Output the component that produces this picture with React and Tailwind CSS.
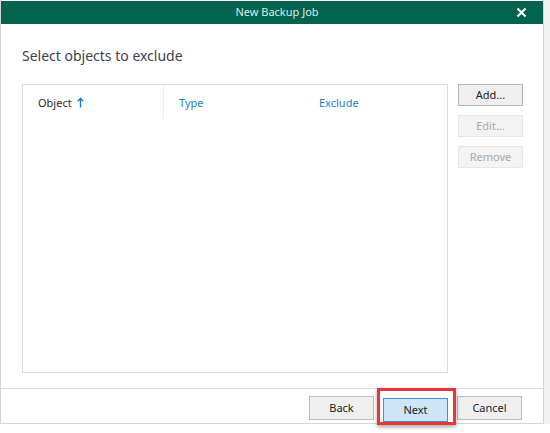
import React from 'react'

const font = { fontFamily: '"Noto Sans", "Open Sans", sans-serif' }

function SideButton({ children, disabled }) {
  return (
    <button
      className={
        'w-[65px] h-[22px] text-[11px] border ' +
        (disabled
          ? 'bg-[#f3f3f3] border-[#e6e6e6] text-[#a8a8a8]'
          : 'bg-[#efefef] border-[#b4b4b4] text-[#222]')
      }
    >
      {children}
    </button>
  )
}

function FooterButton({ children, primary }) {
  return (
    <button
      className={
        'w-[65px] h-[24px] text-[11px] text-[#222] border ' +
        (primary ? 'bg-[#cde5f7] border-[#3d8fd0]' : 'bg-[#efefef] border-[#bdbdbd]')
      }
    >
      {children}
    </button>
  )
}

export default function App() {
  return (
    <div className="w-[550px] h-[433px] bg-white overflow-hidden" style={font}>
      <div className="flex h-[424px]">
        {/* dialog */}
        <div className="w-[544px] h-full flex flex-col border-l border-r border-b border-[#d4d4d4] pt-[1px]">
          {/* title bar */}
          <div className="h-[23px] bg-[#04634f] flex items-center relative">
            <div className="flex-1 text-center text-[11px] text-[#d9eee7] pl-[10px]">New Backup Job</div>
            <svg className="absolute right-[16px] top-[6px]" width="11" height="11" viewBox="0 0 11 11">
              <path d="M1.5 1.5 L9.5 9.5 M9.5 1.5 L1.5 9.5" stroke="#ffffff" strokeWidth="2" />
            </svg>
          </div>

          {/* body */}
          <div className="flex-1 flex flex-col bg-white">
            <div className="pl-[21px] pt-[21px] h-[60px] text-[14px] text-[#3f3f4d]">Select objects to exclude</div>
            <div className="flex pl-[21px] gap-[10px]">
              <div className="w-[426px] h-[289px] border border-[#dcdcdc]">
                <div className="flex h-[34px] text-[11px]">
                  <div className="w-[141px] border-r border-[#eeeeee] pl-[15px] pt-[10px] text-[#2b2b2b] flex items-start gap-[5px]">
                    <span>Object</span>
                    <svg className="mt-[2px]" width="7" height="11" viewBox="0 0 7 11">
                      <path d="M3.5 10.5 V1.5 M0.8 4.2 L3.5 1.3 L6.2 4.2" stroke="#1b7fc4" strokeWidth="1.4" fill="none" />
                    </svg>
                  </div>
                  <div className="w-[140px] pl-[15px] pt-[10px] text-[#1b7fc4]">Type</div>
                  <div className="pl-[15px] pt-[10px] text-[#1b7fc4]">Exclude</div>
                </div>
              </div>
              <div className="flex flex-col gap-[9px]">
                <SideButton>Add...</SideButton>
                <SideButton disabled>Edit...</SideButton>
                <SideButton disabled>Remove</SideButton>
              </div>
            </div>

            {/* footer */}
            <div className="mt-auto border-t border-[#dedede] h-[35px] flex justify-end items-start pt-[7px] pr-[21px] gap-[9px]">
              <FooterButton>Back</FooterButton>
              <div className="relative">
                <FooterButton primary>Next</FooterButton>
                <div className="absolute -left-[6px] -right-[8px] -top-[8px] -bottom-[3px] border-[3px] border-[#e8343a] shadow-[0_2px_4px_rgba(0,0,0,0.35)] pointer-events-none" />
              </div>
              <FooterButton>Cancel</FooterButton>
            </div>
          </div>
        </div>
        <div className="flex-1 bg-[#f2f2f2]" />
      </div>
    </div>
  )
}
